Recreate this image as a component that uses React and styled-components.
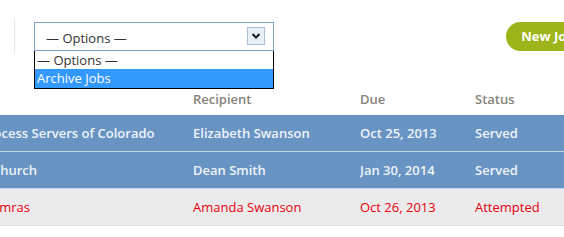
import React from 'react';
import styled, { createGlobalStyle } from 'styled-components';

const Global = createGlobalStyle`
  html, body { margin: 0; padding: 0; background: #fff; }
  body {
    font-family: "Open Sans", "Liberation Sans", Arial, sans-serif;
    width: 564px;
    height: 237px;
    overflow: hidden;
  }
`;

const Page = styled.div`
  width: 564px;
  height: 237px;
  overflow: hidden;
  position: relative;
`;

const Toolbar = styled.div`
  display: flex;
  align-items: center;
  height: 36px;
  padding-top: 18px;
  padding-left: 14px;
  position: relative;
`;

const Divider = styled.div`
  width: 1px;
  height: 34px;
  background: #e6e6e6;
  margin-right: 19px;
`;

const SelectWrap = styled.div`
  position: relative;
  width: 240px;
`;

const SelectBox = styled.div`
  box-sizing: border-box;
  height: 29px;
  border: 1px solid #7fa4cf;
  display: flex;
  align-items: center;
  justify-content: space-between;
  padding: 0 8px 0 11px;
  font-size: 13px;
  color: #333;
  background: #fff;
`;

const SelectLabel = styled.span`
  margin-top: 3px;
`;

const Arrow = styled.span`
  box-sizing: border-box;
  width: 18px;
  height: 18px;
  border: 1px solid #a8bcd6;
  background: #e9eff7;
  display: flex;
  align-items: center;
  justify-content: center;
`;

const Menu = styled.div`
  position: absolute;
  top: 29px;
  left: 0;
  right: 0;
  border: 1px solid #000;
  border-top: none;
  background: #fff;
  z-index: 2;
`;

const Option = styled.div`
  height: ${p => (p.$active ? '19px' : '18px')};
  line-height: ${p => (p.$active ? '19px' : '18px')};
  padding-left: 2px;
  font-size: 13px;
  color: ${p => (p.$active ? '#fff' : '#333')};
  background: ${p => (p.$active ? '#3399ff' : '#fff')};
`;

const NewButton = styled.button`
  margin-left: auto;
  margin-right: -33px;
  height: 29px;
  padding: 0 16px 0 15px;
  border: none;
  border-radius: 15px;
  background: #9db51a;
  color: #fff;
  font-family: inherit;
  font-weight: 700;
  font-size: 13px;
  white-space: nowrap;
`;

const Table = styled.div`
  margin-top: 34px;
  margin-left: -20px;
`;

const Row = styled.div`
  display: grid;
  grid-template-columns: 213px 167px 115px 120px;
  align-items: center;
  box-sizing: border-box;
  height: ${p => (p.$head ? '27px' : '37px')};
  padding-bottom: ${p => (p.$head ? '5px' : '0')};
  background: ${p => p.$bg || 'transparent'};
  border-bottom: 1px solid ${p => p.$line || 'transparent'};
  font-size: 13px;
  font-weight: ${p => (p.$head || p.$bold ? 600 : 400)};
  color: ${p => p.$color};
  white-space: nowrap;
`;

const Cell = styled.div`
  overflow: hidden;
`;

const rows = [
  { c: ['Process Servers of Colorado', 'Elizabeth Swanson', 'Oct 25, 2013', 'Served'], served: true },
  { c: ['A Church', 'Dean Smith', 'Jan 30, 2014', 'Served'], served: true },
  { c: ['Wamras', 'Amanda Swanson', 'Oct 26, 2013', 'Attempted'], served: false },
];

export default function App() {
  return (
    <Page>
      <Global />
      <Toolbar>
        <Divider />
        <SelectWrap>
          <SelectBox>
            <SelectLabel>— Options —</SelectLabel>
            <Arrow>
              <svg width="10" height="8" viewBox="0 0 10 8">
                <path d="M1.5 2 L5 5.5 L8.5 2" fill="none" stroke="#1a1a1a" strokeWidth="2" />
              </svg>
            </Arrow>
          </SelectBox>
          <Menu>
            <Option>— Options —</Option>
            <Option $active>Archive Jobs</Option>
          </Menu>
        </SelectWrap>
        <NewButton>New Jobs</NewButton>
      </Toolbar>
      <Table>
        <Row $head $color="#86837a">
          <Cell />
          <Cell>Recipient</Cell>
          <Cell>Due</Cell>
          <Cell>Status</Cell>
        </Row>
        {rows.map((r, i) => (
          <Row
            key={i}
            $bold={r.served}
            $bg={r.served ? '#6894c3' : '#ebebeb'}
            $line={r.served ? '#c4d5e8' : '#dcdcdc'}
            $color={r.served ? '#eef3f9' : '#e8000b'}
          >
            {r.c.map((t, j) => (
              <Cell key={j}>{t}</Cell>
            ))}
          </Row>
        ))}
      </Table>
    </Page>
  );
}
